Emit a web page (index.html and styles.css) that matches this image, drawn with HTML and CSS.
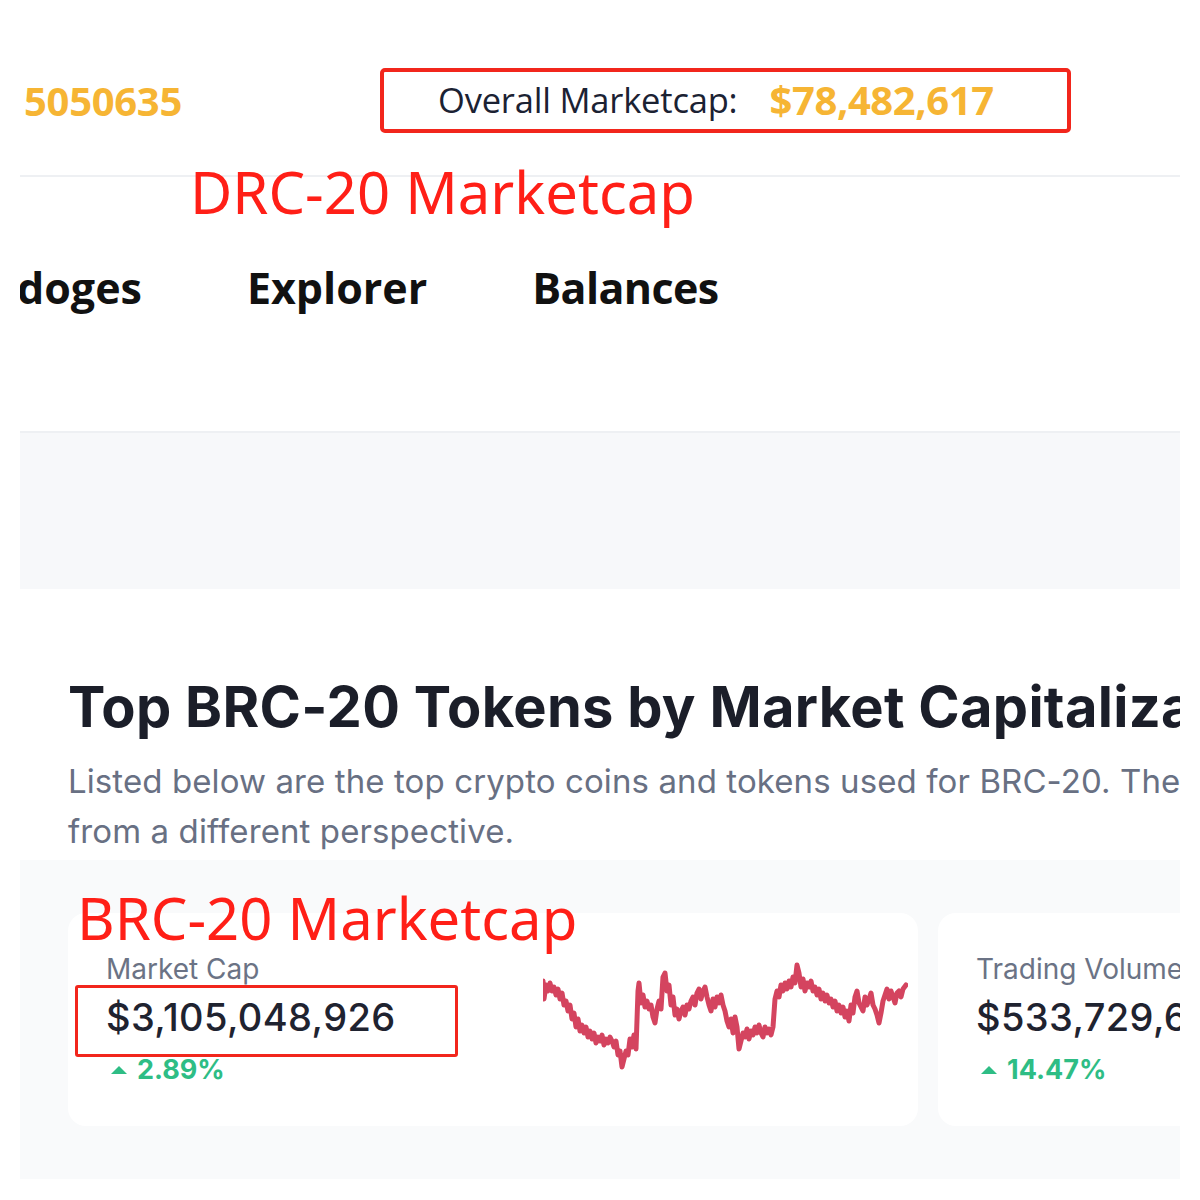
FILE: index.html
```html
<!DOCTYPE html>
<html lang="en">
<head>
    <meta charset="UTF-8">
    <meta name="viewport" content="width=device-width, initial-scale=1.0">
    <title>BRC-20 Marketcap</title>
    <link rel="stylesheet" href="styles.css">
</head>
<body>

<div class="page">

    <!-- Header: block number + overall marketcap -->
    <div class="topbar">
        <div class="block-no">5050635</div>
        <div class="overall">
            <span class="overall-label">Overall Marketcap:</span>
            <span class="overall-value">$78,482,617</span>
        </div>
    </div>

    <div class="divider"></div>

    <!-- Navigation -->
    <ul class="nav">
        <li>doges</li>
        <li>Explorer</li>
        <li>Balances</li>
    </ul>

    <div class="banner"></div>

    <!-- Intro -->
    <div class="intro">
        <h1>Top BRC-20 Tokens by Market Capitalization</h1>
        <p>Listed below are the top crypto coins and tokens used for BRC-20. They are ranked by market capitalization<br>from a different perspective.</p>
    </div>

    <!-- Stat cards -->
    <div class="stats">
        <div class="card card-wide">
            <div class="stat">
                <div class="stat-label">Market Cap</div>
                <div class="stat-value">$3,105,048,926</div>
                <div class="stat-change"><span class="up"></span>2.89%</div>
            </div>
            <svg class="spark" viewBox="0 0 365 112" width="365" height="112">
                <polyline points="0,20 1,38 3,24 5,30 7,22 9,30 11,26 13,34 15,28 17,38 19,32 21,44 23,40 25,50 27,44 29,58 31,52 33,66 35,58 37,70 39,64 41,72 43,66 45,76 47,70 49,78 51,72 53,82 55,76 57,80 59,74 61,84 63,78 65,82 67,76 69,80 71,86 73,80 75,94 77,90 79,106 81,98 83,90 85,94 87,78 89,86 91,74 93,88 95,30 96,22 98,42 100,34 102,46 104,40 106,48 108,44 110,56 112,62 114,48 116,40 118,48 120,16 122,12 124,30 126,24 128,44 130,36 132,54 134,48 136,58 138,50 140,46 142,54 144,44 146,48 148,40 150,36 152,44 154,32 156,28 158,38 160,30 162,26 164,36 166,44 168,50 170,38 172,46 174,36 176,42 178,34 180,44 182,50 184,60 186,66 188,58 190,72 192,56 194,66 196,88 198,80 200,72 202,76 204,68 206,78 208,70 210,74 212,66 214,72 216,64 218,72 220,76 222,66 224,72 226,68 228,74 230,66 232,38 234,30 236,36 238,24 240,30 242,22 244,28 246,20 248,26 250,16 252,22 254,4 256,12 258,26 260,18 262,30 264,22 266,26 268,20 270,30 272,26 274,34 276,28 278,38 280,32 282,40 284,34 286,42 288,38 290,46 292,40 294,50 296,44 298,52 300,46 302,56 304,50 306,60 308,44 310,52 312,36 314,30 316,42 318,46 320,50 322,36 324,44 326,38 328,32 330,44 332,48 334,54 336,62 338,52 340,40 342,34 344,28 346,38 348,30 350,36 352,42 354,32 356,30 358,36 360,28 363,24"/>
            </svg>
        </div>
        <div class="card">
            <div class="stat">
                <div class="stat-label">Trading Volume</div>
                <div class="stat-value">$533,729,612</div>
                <div class="stat-change"><span class="up"></span>14.47%</div>
            </div>
        </div>
    </div>

    <!-- Annotations drawn over the screenshot -->
    <div class="note note-drc">DRC-20 Marketcap</div>
    <div class="note note-brc">BRC-20 Marketcap</div>
    <div class="mark-box"></div>

</div>

</body>
</html>
```

FILE: styles.css
```css
body {
    margin: 0;
    background: #fff;
    font-family: "Open Sans", Arial, sans-serif;
}
.page {
    position: relative;
    width: 1160px;
    margin: 0 20px;
    overflow: hidden;
}

/* header */
.topbar {
    display: flex;
    align-items: center;
    padding-top: 68px;
}
.block-no {
    width: 356px;
    padding-left: 4px;
    font-size: 40px;
    font-weight: 700;
    color: #f6b534;
    letter-spacing: -0.3px;
}
.overall {
    display: flex;
    align-items: center;
    box-sizing: border-box;
    width: 691px;
    height: 65px;
    padding: 0 0 2px 54px;
    border: 4px solid #f2261c;
    border-radius: 5px;
}
.overall-label {
    font-size: 34.5px;
    color: #1b2233;
    letter-spacing: -0.2px;
}
.overall-value {
    margin-left: 32px;
    font-size: 40px;
    font-weight: 700;
    color: #f6b534;
    letter-spacing: -0.4px;
}
.divider {
    height: 2px;
    margin-top: 42px;
    background: #eef0f3;
}

/* nav */
.nav {
    display: flex;
    gap: 105px;
    margin: 82px 0 0 -3px;
    padding: 0;
    list-style: none;
}
.nav li {
    font-size: 43px;
    font-weight: 700;
    line-height: 57px;
    color: #111;
}
.nav li:last-child {
    letter-spacing: -0.6px;
}
.banner {
    height: 156px;
    margin-top: 115px;
    border-top: 2px solid #eef0f3;
    background: #f7f8fa;
}

/* intro */
.intro {
    padding: 85px 0 0 48px;
    font-family: Inter, "Noto Sans", sans-serif;
    white-space: nowrap;
}
.intro h1 {
    margin: 0;
    font-size: 56px;
    line-height: 66px;
    font-weight: 700;
    color: #1b1e29;
    letter-spacing: 0.3px;
}
.intro p {
    margin: 16px 0 0;
    font-size: 33px;
    line-height: 50px;
    color: #687083;
    letter-spacing: 0.1px;
}

/* cards */
.stats {
    display: flex;
    gap: 20px;
    margin-top: 4px;
    padding: 53px 0 53px 48px;
    background: #f9fafb;
    font-family: Inter, "Noto Sans", sans-serif;
}
.card {
    display: flex;
    flex-shrink: 0;
    width: 600px;
    height: 213px;
    box-sizing: border-box;
    padding: 39px 40px 0 38px;
    background: #fff;
    border-radius: 18px;
}
.card-wide {
    width: 850px;
    justify-content: space-between;
    padding-right: 10px;
}
.stat-label {
    font-size: 28px;
    line-height: 34px;
    color: #6b7385;
}
.stat-value {
    margin-top: 8px;
    font-size: 38px;
    line-height: 47px;
    font-weight: 500;
    color: #1f2330;
    letter-spacing: 0.4px;
}
.stat-change {
    display: flex;
    align-items: center;
    margin-top: 12px;
    padding-left: 5px;
    font-size: 27px;
    line-height: 34px;
    font-weight: 700;
    color: #2ebd85;
}
.up {
    width: 0;
    height: 0;
    margin-right: 10px;
    border-left: 8px solid transparent;
    border-right: 8px solid transparent;
    border-bottom: 8px solid #2ebd85;
}
.spark {
    margin-top: 9px;
}
.spark polyline {
    fill: none;
    stroke: #d4445f;
    stroke-width: 5;
    stroke-linejoin: round;
    stroke-linecap: round;
}

/* red annotations */
.note {
    position: absolute;
    font-family: "Noto Sans", sans-serif;
    font-size: 58px;
    line-height: 1;
    color: #ff1f17;
    white-space: nowrap;
}
.note-drc {
    left: 170px;
    top: 163px;
}
.note-brc {
    left: 57px;
    top: 889px;
}
.mark-box {
    position: absolute;
    left: 55px;
    top: 985px;
    width: 383px;
    height: 72px;
    box-sizing: border-box;
    border: 3px solid #f2261c;
    border-radius: 3px;
}
```
